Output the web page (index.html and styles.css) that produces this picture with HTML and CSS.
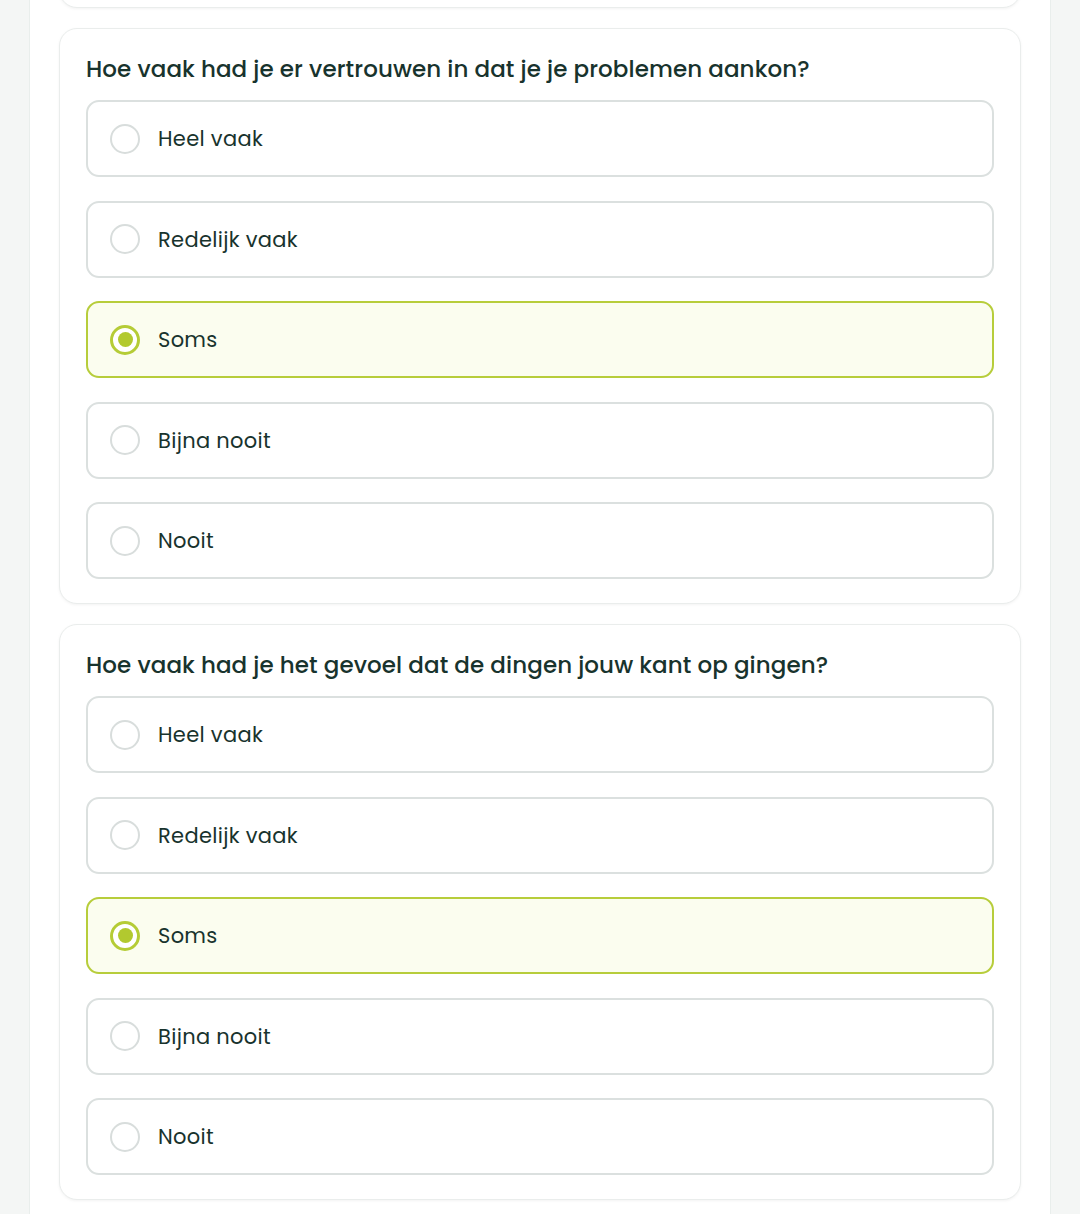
FILE: index.html
```html
<!DOCTYPE html>
<html lang="nl">

<head>
    <meta charset="UTF-8">
    <meta name="viewport" content="width=device-width, initial-scale=1.0">
    <title>Vragenlijst</title>
    <link rel="stylesheet" href="styles.css">
</head>

<body>
    <div class="page">
        <div class="survey">

            <!-- vorige vraag (grotendeels buiten beeld) -->
            <div class="question-card">
                <h2 class="question">Hoe vaak voelde je je nerveus en gestrest?</h2>
                <div class="options">
                    <label class="option"><span class="radio"></span><span class="label">Heel vaak</span></label>
                    <label class="option"><span class="radio"></span><span class="label">Redelijk vaak</span></label>
                    <label class="option"><span class="radio"></span><span class="label">Soms</span></label>
                    <label class="option"><span class="radio"></span><span class="label">Bijna nooit</span></label>
                    <label class="option"><span class="radio"></span><span class="label">Nooit</span></label>
                </div>
            </div>

            <div class="question-card">
                <h2 class="question">Hoe vaak had je er vertrouwen in dat je je problemen aankon?</h2>
                <div class="options">
                    <label class="option"><span class="radio"></span><span class="label">Heel vaak</span></label>
                    <label class="option"><span class="radio"></span><span class="label">Redelijk vaak</span></label>
                    <label class="option selected"><span class="radio"></span><span class="label">Soms</span></label>
                    <label class="option"><span class="radio"></span><span class="label">Bijna nooit</span></label>
                    <label class="option"><span class="radio"></span><span class="label">Nooit</span></label>
                </div>
            </div>

            <div class="question-card">
                <h2 class="question">Hoe vaak had je het gevoel dat de dingen jouw kant op gingen?</h2>
                <div class="options">
                    <label class="option"><span class="radio"></span><span class="label">Heel vaak</span></label>
                    <label class="option"><span class="radio"></span><span class="label">Redelijk vaak</span></label>
                    <label class="option selected"><span class="radio"></span><span class="label">Soms</span></label>
                    <label class="option"><span class="radio"></span><span class="label">Bijna nooit</span></label>
                    <label class="option"><span class="radio"></span><span class="label">Nooit</span></label>
                </div>
            </div>

        </div>
    </div>
</body>

</html>
```

FILE: styles.css
```css
* {
    margin: 0;
    padding: 0;
    box-sizing: border-box;
}

body {
    background-color: #f4f6f5;
    font-family: 'Poppins', 'Open Sans', sans-serif;
    color: #18332d;
    overflow: hidden;
}

.page {
    width: 1022px;
    min-height: 100vh;
    margin-left: 29px;
    padding: 0 29px 60px;
    background-color: #fff;
    border-left: 1px solid #e9eeec;
    border-right: 1px solid #e9eeec;
}

.survey {
    display: flex;
    flex-direction: column;
    gap: 20px;
    margin-top: -568px;
}

.question-card {
    background: #fff;
    border: 1px solid #eaedec;
    border-radius: 18px;
    box-shadow: 0 1px 3px rgba(0, 0, 0, 0.05);
    padding: 24px 26px 24px;
}

.question {
    font-size: 23px;
    font-weight: 500;
    line-height: 32px;
    letter-spacing: 0.08px;
    margin-bottom: 15px;
}

.options {
    display: flex;
    flex-direction: column;
    gap: 23.5px;
}

.option {
    display: flex;
    align-items: center;
    gap: 18px;
    height: 77px;
    padding: 0 22px;
    border: 2px solid #dbe0df;
    border-radius: 13px;
    background: #fff;
    cursor: pointer;
}

.option .label {
    font-size: 21px;
    line-height: 1;
    letter-spacing: 0.3px;
}

.radio {
    width: 30px;
    height: 30px;
    border-radius: 50%;
    border: 2px solid #d8dddc;
    display: flex;
    align-items: center;
    justify-content: center;
    flex-shrink: 0;
}

.option.selected {
    border-color: #b7cd3b;
    background: #fbfdef;
}

.option.selected .radio {
    border: 3px solid #b5cc36;
    background: #fff;
}

.option.selected .radio::after {
    content: "";
    width: 15px;
    height: 15px;
    border-radius: 50%;
    background: #b2c92f;
}
```
